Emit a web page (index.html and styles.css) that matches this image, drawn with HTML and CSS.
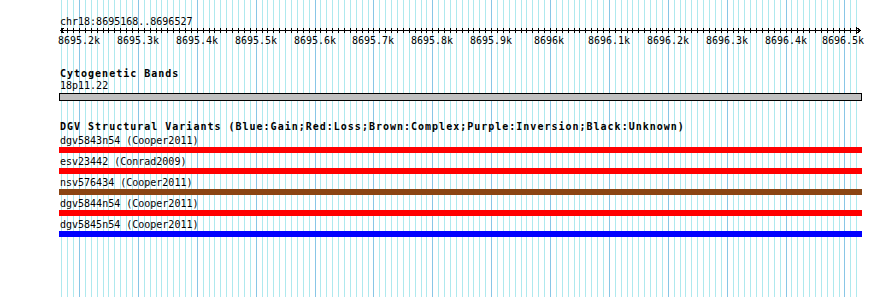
FILE: index.html
```html
<!DOCTYPE html>
<html lang="en">
<head>
<meta charset="utf-8">
<title>Genome Browser – chr18:8695168..8696527</title>
<link rel="stylesheet" href="styles.css">
</head>
<body>
<div class="browser">
  <svg class="grid" width="890" height="297" viewBox="0 0 890 297" aria-hidden="true">
    <path class="grid-minor" d="M61.5 0v297M67.5 0v297M73.5 0v297M85.5 0v297M91.5 0v297M97.5 0v297M103.5 0v297M108.5 0v297M114.5 0v297M120.5 0v297M126.5 0v297M132.5 0v297M144.5 0v297M150.5 0v297M156.5 0v297M161.5 0v297M167.5 0v297M173.5 0v297M179.5 0v297M185.5 0v297M191.5 0v297M203.5 0v297M209.5 0v297M214.5 0v297M220.5 0v297M226.5 0v297M232.5 0v297M238.5 0v297M244.5 0v297M250.5 0v297M262.5 0v297M267.5 0v297M273.5 0v297M279.5 0v297M285.5 0v297M291.5 0v297M297.5 0v297M303.5 0v297M309.5 0v297M320.5 0v297M326.5 0v297M332.5 0v297M338.5 0v297M344.5 0v297M350.5 0v297M356.5 0v297M362.5 0v297M368.5 0v297M379.5 0v297M385.5 0v297M391.5 0v297M397.5 0v297M403.5 0v297M409.5 0v297M415.5 0v297M421.5 0v297M426.5 0v297M438.5 0v297M444.5 0v297M450.5 0v297M456.5 0v297M462.5 0v297M468.5 0v297M473.5 0v297M479.5 0v297M485.5 0v297M497.5 0v297M503.5 0v297M509.5 0v297M515.5 0v297M521.5 0v297M526.5 0v297M532.5 0v297M538.5 0v297M544.5 0v297M556.5 0v297M562.5 0v297M568.5 0v297M574.5 0v297M579.5 0v297M585.5 0v297M591.5 0v297M597.5 0v297M603.5 0v297M615.5 0v297M621.5 0v297M627.5 0v297M632.5 0v297M638.5 0v297M644.5 0v297M650.5 0v297M656.5 0v297M662.5 0v297M674.5 0v297M680.5 0v297M685.5 0v297M691.5 0v297M697.5 0v297M703.5 0v297M709.5 0v297M715.5 0v297M721.5 0v297M733.5 0v297M738.5 0v297M744.5 0v297M750.5 0v297M756.5 0v297M762.5 0v297M768.5 0v297M774.5 0v297M780.5 0v297M791.5 0v297M797.5 0v297M803.5 0v297M809.5 0v297M815.5 0v297M821.5 0v297M827.5 0v297M833.5 0v297M839.5 0v297M850.5 0v297M856.5 0v297"/>
    <path class="grid-major" d="M79.5 0v297M138.5 0v297M197.5 0v297M256.5 0v297M315.5 0v297M373.5 0v297M432.5 0v297M491.5 0v297M550.5 0v297M609.5 0v297M668.5 0v297M727.5 0v297M786.5 0v297M844.5 0v297"/>
  </svg>

  <div class="ruler">
    <div class="pos">chr18:8695168..8696527</div>
    <svg class="axis" width="890" height="20" viewBox="0 0 890 20">
      <path class="axis-line" d="M60 3.5H861"/>
      <path class="axis-line" d="M64.5 0.5L60.5 3.5L64.5 6.5M856.5 0.5L860.5 3.5L856.5 6.5"/>
      <path class="axis-line" d="M61.5 1v5M67.5 1v5M73.5 1v5M79.5 1v5M85.5 1v5M91.5 1v5M97.5 1v5M103.5 1v5M108.5 1v5M114.5 1v5M120.5 1v5M126.5 1v5M132.5 1v5M138.5 1v5M144.5 1v5M150.5 1v5M156.5 1v5M161.5 1v5M167.5 1v5M173.5 1v5M179.5 1v5M185.5 1v5M191.5 1v5M197.5 1v5M203.5 1v5M209.5 1v5M214.5 1v5M220.5 1v5M226.5 1v5M232.5 1v5M238.5 1v5M244.5 1v5M250.5 1v5M256.5 1v5M262.5 1v5M267.5 1v5M273.5 1v5M279.5 1v5M285.5 1v5M291.5 1v5M297.5 1v5M303.5 1v5M309.5 1v5M315.5 1v5M320.5 1v5M326.5 1v5M332.5 1v5M338.5 1v5M344.5 1v5M350.5 1v5M356.5 1v5M362.5 1v5M368.5 1v5M373.5 1v5M379.5 1v5M385.5 1v5M391.5 1v5M397.5 1v5M403.5 1v5M409.5 1v5M415.5 1v5M421.5 1v5M426.5 1v5M432.5 1v5M438.5 1v5M444.5 1v5M450.5 1v5M456.5 1v5M462.5 1v5M468.5 1v5M473.5 1v5M479.5 1v5M485.5 1v5M491.5 1v5M497.5 1v5M503.5 1v5M509.5 1v5M515.5 1v5M521.5 1v5M526.5 1v5M532.5 1v5M538.5 1v5M544.5 1v5M550.5 1v5M556.5 1v5M562.5 1v5M568.5 1v5M574.5 1v5M579.5 1v5M585.5 1v5M591.5 1v5M597.5 1v5M603.5 1v5M609.5 1v5M615.5 1v5M621.5 1v5M627.5 1v5M632.5 1v5M638.5 1v5M644.5 1v5M650.5 1v5M656.5 1v5M662.5 1v5M668.5 1v5M674.5 1v5M680.5 1v5M685.5 1v5M691.5 1v5M697.5 1v5M703.5 1v5M709.5 1v5M715.5 1v5M721.5 1v5M727.5 1v5M733.5 1v5M738.5 1v5M744.5 1v5M750.5 1v5M756.5 1v5M762.5 1v5M768.5 1v5M774.5 1v5M780.5 1v5M786.5 1v5M791.5 1v5M797.5 1v5M803.5 1v5M809.5 1v5M815.5 1v5M821.5 1v5M827.5 1v5M833.5 1v5M839.5 1v5M844.5 1v5M850.5 1v5M856.5 1v5"/>
      <g class="axis-labels">
        <text x="79" y="17">8695.2k</text>
        <text x="138" y="17">8695.3k</text>
        <text x="197" y="17">8695.4k</text>
        <text x="256" y="17">8695.5k</text>
        <text x="315" y="17">8695.6k</text>
        <text x="373" y="17">8695.7k</text>
        <text x="432" y="17">8695.8k</text>
        <text x="491" y="17">8695.9k</text>
        <text x="549" y="17">8696k</text>
        <text x="609" y="17">8696.1k</text>
        <text x="668" y="17">8696.2k</text>
        <text x="727" y="17">8696.3k</text>
        <text x="786" y="17">8696.4k</text>
        <text x="843" y="17">8696.5k</text>
      </g>
    </svg>
  </div>

  <section class="track cyto">
    <h2 class="track-title">Cytogenetic Bands</h2>
    <div class="item-label">18p11.22</div>
    <div class="band"></div>
  </section>

  <section class="track dgv">
    <h2 class="track-title dgv-title">DGV Structural Variants (Blue:Gain;Red:Loss;Brown:Complex;Purple:Inversion;Black:Unknown)</h2>
    <div class="item">
      <div class="item-label row-label">dgv5843n54 (Cooper2011)</div>
      <div class="bar loss"></div>
    </div>
    <div class="item">
      <div class="item-label row-label">esv23442 (Conrad2009)</div>
      <div class="bar loss"></div>
    </div>
    <div class="item">
      <div class="item-label row-label">nsv576434 (Cooper2011)</div>
      <div class="bar complex"></div>
    </div>
    <div class="item">
      <div class="item-label row-label">dgv5844n54 (Cooper2011)</div>
      <div class="bar loss"></div>
    </div>
    <div class="item">
      <div class="item-label row-label">dgv5845n54 (Cooper2011)</div>
      <div class="bar gain"></div>
    </div>
  </section>
</div>
</body>
</html>
```

FILE: styles.css
```css
html, body {
  margin: 0;
  padding: 0;
  background: #ffffff;
}

.browser {
  position: relative;
  width: 890px;
  height: 303px;
  overflow: hidden;
  font-family: "DejaVu Sans Mono", "Liberation Mono", monospace;
  font-size: 10px;
  color: #000000;
}

.grid {
  position: absolute;
  left: 0;
  top: 0;
  z-index: 0;
  shape-rendering: crispEdges;
}

.grid-minor {
  stroke: #aee9ee;
  stroke-width: 1;
  fill: none;
}

.grid-major {
  stroke: #88c6e6;
  stroke-width: 1;
  fill: none;
}

.ruler,
.track {
  position: relative;
  z-index: 1;
}

.pos {
  padding: 16px 0 0 60px;
  line-height: 11px;
  height: 11px;
}

.axis {
  display: block;
  shape-rendering: crispEdges;
}

.axis-line {
  stroke: #000000;
  stroke-width: 1;
  fill: none;
}

.axis-labels text {
  font-family: "DejaVu Sans Mono", "Liberation Mono", monospace;
  font-size: 10px;
  fill: #000000;
  text-anchor: middle;
}

.track {
  padding-left: 59px;
}

.cyto {
  margin-top: 21px;
}

.track-title {
  margin: 0;
  padding-left: 1px;
  font-size: 10px;
  font-weight: bold;
  letter-spacing: 1px;
  line-height: 12px;
  height: 12px;
  white-space: nowrap;
}

.item-label {
  padding-left: 1px;
  line-height: 12px;
  height: 12px;
  white-space: nowrap;
}

.band {
  margin-top: 1px;
  width: 803px;
  height: 8px;
  box-sizing: border-box;
  border: 1px solid #000000;
  background: #c0c0c0;
}

.dgv {
  margin-top: 19px;
}

.dgv-title {
  padding-top: 1px;
  line-height: 11px;
  height: 11px;
}

.row-label {
  padding-top: 2px;
  line-height: 13px;
  height: 13px;
}

.bar {
  width: 803px;
  height: 6px;
}

.bar.loss {
  background: #ff0000;
}

.bar.gain {
  background: #0000ff;
}

.bar.complex {
  background: #8b4513;
}
```
